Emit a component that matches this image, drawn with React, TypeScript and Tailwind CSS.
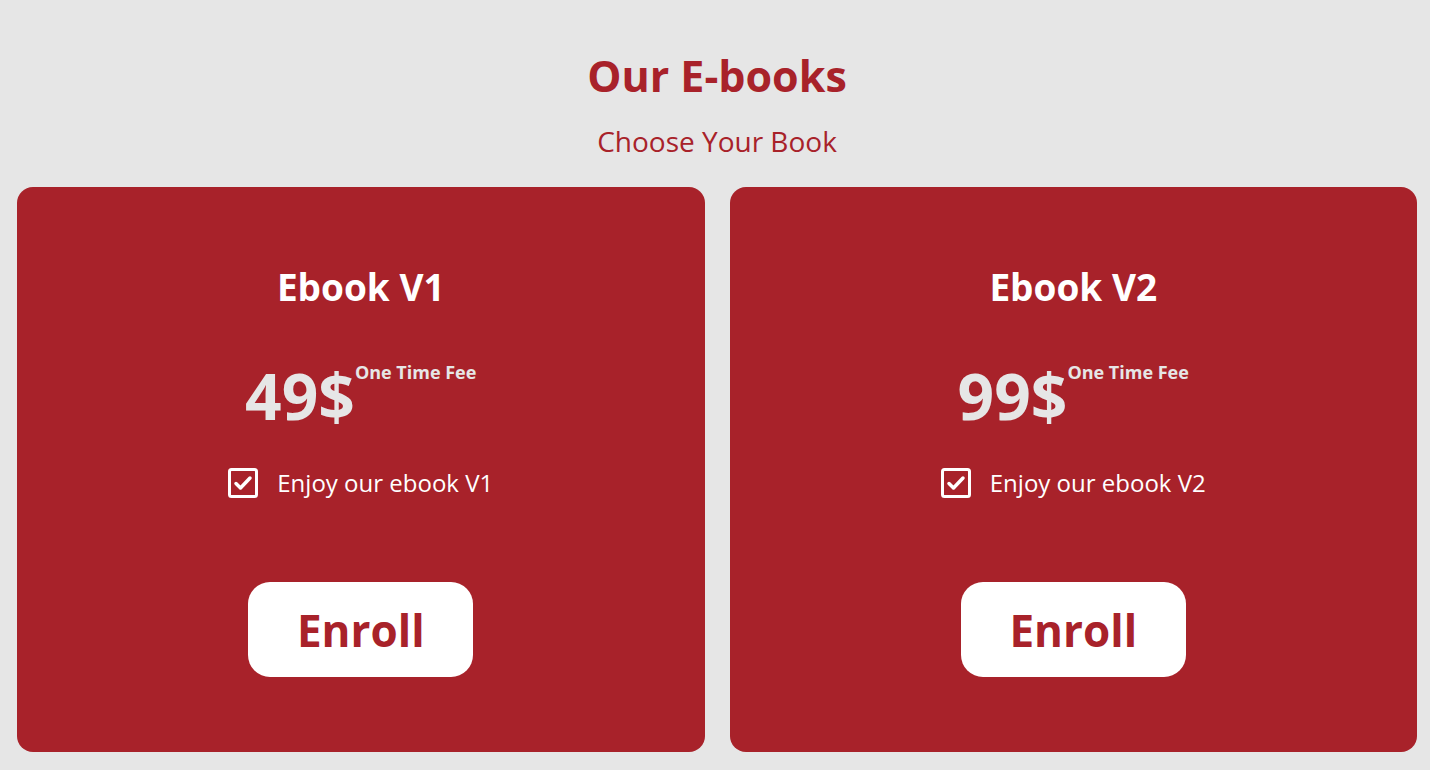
import React from 'react';

const books = [
  { title: 'Ebook V1', price: '49$', feature: 'Enjoy our ebook V1' },
  { title: 'Ebook V2', price: '99$', feature: 'Enjoy our ebook V2' },
];

function CheckSquare() {
  return (
    <svg width="30" height="30" viewBox="0 0 30 30" fill="none" className="shrink-0">
      <rect x="1.5" y="1.5" width="27" height="27" rx="2" stroke="white" strokeWidth="3" />
      <path d="M8 15.5l4.5 4.5L22 10" stroke="white" strokeWidth="3.5" strokeLinecap="round" strokeLinejoin="round" />
    </svg>
  );
}

function BookCard({ title, price, feature }: { title: string; price: string; feature: string }) {
  return (
    <div className="flex-1 bg-[#a8222a] rounded-2xl flex flex-col items-center pt-[78px] pb-[75px]">
      <h3 className="text-[37px] leading-[44px] font-bold text-white">{title}</h3>
      <div className="mt-[51px] flex items-start">
        <span className="text-[64px] leading-[72px] font-bold text-[#e6e6e6]">{price}</span>
        <span className="text-[18px] leading-[24px] font-bold text-[#e6e6e6]">One Time Fee</span>
      </div>
      <div className="mt-[35px] flex items-center gap-[19px]">
        <CheckSquare />
        <span className="text-[24px] leading-[32px] text-white">{feature}</span>
      </div>
      <button className="mt-auto w-[225px] h-[95px] bg-white rounded-[22px] text-[44px] font-bold text-[#a8222a]">
        Enroll
      </button>
    </div>
  );
}

export default function App() {
  return (
    <div
      className="min-h-[770px] bg-[#e6e6e6] pl-[17px] pr-[13px] pt-[48px] pb-[18px] flex flex-col"
      style={{ fontFamily: '"Open Sans", "Noto Sans", sans-serif' }}
    >
      <h1 className="text-center text-[43px] leading-[56px] font-bold text-[#a8222a]">Our E-books</h1>
      <p className="mt-[17px] text-center text-[28px] leading-[40px] text-[#a8222a]">Choose Your Book</p>
      <div className="mt-[26px] flex gap-[25px] h-[565px]">
        {books.map((b) => (
          <BookCard key={b.title} {...b} />
        ))}
      </div>
    </div>
  );
}
